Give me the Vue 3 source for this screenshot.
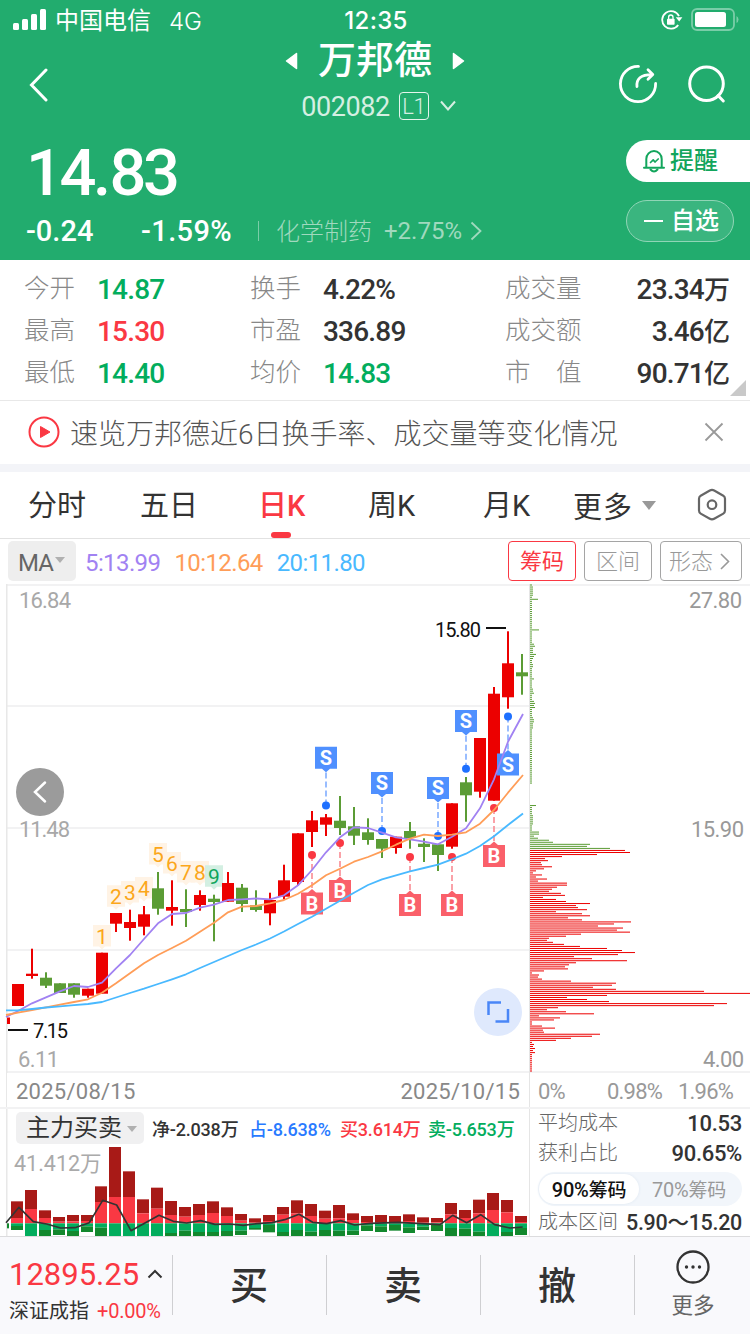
<template>
  <div class="page">
    <header class="header">
      <div class="statusBar">
        <div class="carrier">
          <svg class="signal" width="34" height="22" viewBox="0 0 34 22">
            <rect x="0" y="14" width="6" height="7" rx="1.5" />
            <rect x="9" y="10" width="6" height="11" rx="1.5" />
            <rect x="18" y="5" width="6" height="16" rx="1.5" />
            <rect x="27" y="0" width="6" height="21" rx="1.5" />
          </svg>
          <span class="carrierName">中国电信</span>
          <span class="network">4G</span>
        </div>
        <div class="time">12:35</div>
        <div class="statusIcons">
          <svg width="22" height="20" viewBox="0 0 22 20">
            <path d="M18 6.2A8.8 8.8 0 1 0 17.2 15" fill="none" stroke="#fff" stroke-width="1.8" />
            <path d="M14.8 7.2h6.6l-3.2 4.4z" fill="#fff" />
            <rect x="6" y="8.8" width="7.6" height="6" rx="0.8" fill="#fff" />
            <path d="M7.6 9V7.2a2.2 2.2 0 0 1 4.4 0V9" fill="none" stroke="#fff" stroke-width="1.3" />
          </svg>
          <svg width="48" height="24" viewBox="0 0 48 24">
            <rect x="1" y="1" width="42" height="21" rx="5" fill="none" stroke="#fff" stroke-opacity="0.4" stroke-width="1.8" />
            <rect x="4" y="4" width="31" height="15" rx="2.5" fill="#fff" />
            <path d="M45.5 8v7q2-1 2-3.500t-2-3.500z" fill="#fff" fill-opacity="0.4" />
          </svg>
        </div>
      </div>

      <div class="navBar">
        <svg class="back" width="20" height="34" viewBox="0 0 20 34">
          <path d="M17 2L2.500 17L17 32" fill="none" stroke="#fff" stroke-width="3" stroke-linecap="round" />
        </svg>
        <div class="stock">
          <div class="stockName">
            <svg width="13" height="18" viewBox="0 0 13 18">
              <path d="M11.500 1.500v15L1.500 9z" fill="#fff" stroke="#fff" stroke-width="1.5" stroke-linejoin="round" />
            </svg>
            <span>万邦德</span>
            <svg width="13" height="18" viewBox="0 0 13 18">
              <path d="M1.500 1.500v15L11.500 9z" fill="#fff" stroke="#fff" stroke-width="1.5" stroke-linejoin="round" />
            </svg>
          </div>
          <div class="stockCode">
            <span class="code">002082</span>
            <span class="level">L1</span>
            <svg width="16" height="12" viewBox="0 0 16 12">
              <path d="M1 1.500L8 9.500L15 1.500" fill="none" stroke="#d5efe2" stroke-width="2" />
            </svg>
          </div>
        </div>
        <div class="navIcons">
          <svg width="40" height="40" viewBox="0 0 40 40" fill="none" stroke="#fff" stroke-width="2.8" stroke-linecap="round" stroke-linejoin="round">
            <path d="M20.500 2.400A17.600 17.600 0 1 0 37.600 19.500" />
            <path d="M19 22.500C18.200 15 22.500 10.600 34 10.600M30 5.800L34.800 10.600L30 15.300" />
          </svg>
          <svg width="40" height="40" viewBox="0 0 40 40" fill="none" stroke="#fff" stroke-width="3" stroke-linecap="round">
            <circle cx="19.500" cy="19.800" r="16.800" />
            <path d="M31 31.500L36.300 37" />
          </svg>
        </div>
      </div>

      <div class="quote">
        <div class="quoteMain">
          <div class="price">14<i>.</i>83</div>
          <div class="changeLine">
            <span class="change">-0.24</span>
            <span class="percent">-1.59%</span>
            <i class="split"></i>
            <span class="sector">化学制药</span>
            <span class="sectorPercent">+2.75%</span>
            <svg width="12" height="20" viewBox="0 0 12 20">
              <path d="M1.500 1.500L10.500 10L1.500 18.500" fill="none" stroke="#a0d9be" stroke-width="1.8" />
            </svg>
          </div>
        </div>
        <div class="quoteActions">
          <div class="remind">
            <svg width="24" height="25" viewBox="0 0 24 25" fill="none" stroke="#12a55c" stroke-width="2" stroke-linejoin="round" stroke-linecap="round">
              <path d="M2 18.800H22M4.300 18.500V10A7.700 7.900 0 0 1 19.700 10V18.500" />
              <path d="M8.500 20.500Q12 24.500 15.500 20.500" />
              <path d="M8.500 13.500L11.200 10.800L13 13L16.200 10" stroke-width="1.700" />
            </svg>
            <span>提醒</span>
          </div>
          <div class="favorite">
            <i class="minus"></i>
            <span>自选</span>
          </div>
        </div>
      </div>
    </header>

    <section class="stats">
      <div class="statRow" v-for="(row, index) in stats" :key="index">
        <template v-for="item in row" :key="item.label">
          <span class="statLabel">{{ item.label }}</span>
          <span class="statValue" :class="item.type">{{ item.value }}<b v-if="item.unit">{{ item.unit }}</b></span>
        </template>
      </div>
      <i class="corner"></i>
    </section>

    <section class="notice">
      <svg width="32" height="32" viewBox="0 0 32 32">
        <circle cx="16" cy="16" r="14.500" fill="none" stroke="#fa3843" stroke-width="2" />
        <path d="M12.500 10.500v11L22 16z" fill="#fa3843" stroke="#fa3843" stroke-linejoin="round" />
      </svg>
      <span class="noticeText">速览万邦德近6日换手率、成交量等变化情况</span>
      <svg width="20" height="20" viewBox="0 0 20 20">
        <path d="M1.500 1.500L18.500 18.500M18.500 1.500L1.500 18.500" stroke="#999" stroke-width="1.800" />
      </svg>
    </section>

    <nav class="tabs">
      <span class="tab" v-for="tab in tabs" :key="tab" :class="{ active: tab === activeTab }" @click="activeTab = tab">{{ tab }}</span>
      <span class="tabMore">更多<i class="caret"></i></span>
      <svg width="32" height="34" viewBox="0 0 32 34" fill="none" stroke="#666" stroke-width="2.200" stroke-linejoin="round">
        <path d="M13.800 2.500Q16 1.300 18.200 2.500L27.300 7.700Q29 8.800 29 10.800V22.600Q29 24.600 27.300 25.600L18.200 30.800Q16 32 13.800 30.800L4.700 25.600Q3 24.600 3 22.600V10.800Q3 8.800 4.700 7.700Z" />
        <circle cx="16" cy="16.700" r="4.300" />
      </svg>
    </nav>

    <section class="toolbar">
      <div class="maSelect">MA<i class="caret small"></i></div>
      <div class="maValues">
        <span class="ma5">5:13.99</span>
        <span class="ma10">10:12.64</span>
        <span class="ma20">20:11.80</span>
      </div>
      <div class="chip active">筹码</div>
      <div class="chip">区间</div>
      <div class="chip wide">
        形态
        <svg width="10" height="17" viewBox="0 0 10 17">
          <path d="M1 1L8.500 8.500L1 16" fill="none" stroke="#999" stroke-width="1.600" />
        </svg>
      </div>
    </section>

    <section class="charts">
      <!-- K线 -->
      <svg class="kline" width="530" height="489" viewBox="0 584 530 489">
        <g fill="#f2f2f3">
          <rect v-for="y in gridLines" :key="y" x="7" :y="y" width="523" height="2" />
          <rect x="6" y="584" width="1.500" height="489" fill="#e8e8e8" />
          <rect x="529" y="584" width="1" height="489" fill="#e5e5e5" />
        </g>
        <g class="axis">
          <text x="19" y="607.500" textLength="52">16.84</text>
          <text x="19" y="837" textLength="51">11.48</text>
          <text x="18" y="1067" textLength="41">6.11</text>
        </g>

        <g v-for="tag in countTags" :key="tag.n" :class="tag.n === 9 ? 'tag last' : 'tag'">
          <path :d="`M${tag.x - 9} ${tag.y}h18v21.500h-6l-3 3l-3 -3h-6z`" />
          <text :x="tag.x" :y="tag.y + 18.500">{{ tag.n }}</text>
        </g>

        <g v-for="(c, i) in candles" :key="i" :fill="c[0] ? '#ec0000' : '#5b9c35'">
          <rect :x="candleX(i) - 1" :y="c[1]" width="2" :height="c[4] - c[1]" />
          <rect :x="candleX(i) - 6" :y="c[2]" width="12" :height="c[3] - c[2]" />
        </g>
        <rect x="7" y="1017.500" width="3" height="6.500" fill="#ec0000" />

        <g v-for="m in markers" :key="m.x" :class="m.type">
          <line :x1="m.x" :x2="m.x" :y1="m.dot" :y2="m.box + 11" stroke-width="1.600" stroke-dasharray="6 3" />
          <circle :cx="m.x" :cy="m.dot" r="4" />
          <path :d="markerPath(m)" />
          <text :x="m.x" :y="m.box + 18">{{ m.type }}</text>
        </g>

        <polyline v-for="line in maLines" :key="line.color" :points="toPoints(line.data)" :stroke="line.color" fill="none" stroke-width="1.800" stroke-linejoin="round" />

        <g class="extreme">
          <text x="435" y="636.500" textLength="46">15.80</text>
          <rect x="486" y="627" width="20" height="2" />
          <rect x="8" y="1029" width="20" height="2" />
          <text x="33" y="1038" textLength="35">7.15</text>
        </g>

        <circle cx="40" cy="792" r="24" fill="#9b9b9b" />
        <path d="M45 782.500L35 792L45 801.500" fill="none" stroke="#fff" stroke-width="2.500" stroke-linecap="round" />
        <circle cx="498" cy="1012" r="24" fill="#dfe9fd" />
        <path d="M488.500 1015V1002.500H501M508 1009V1021.500H495.500" fill="none" stroke="#4a86f7" stroke-width="2.500" />
      </svg>

      <!-- 筹码分布 -->
      <svg class="chips" width="220" height="489" viewBox="530 584 220 489">
        <rect x="530" y="584" width="220" height="2" fill="#f2f2f3" />
        <rect x="530" y="1071" width="220" height="2" fill="#f2f2f3" />
        <rect
          v-for="(bar, i) in chipBars"
          :key="i"
          x="530"
          :y="bar.y"
          :width="bar.width"
          height="1"
          :fill="bar.color"
        />
        <g class="axis right">
          <text x="689" y="607.500" textLength="53">27.80</text>
          <text x="691" y="837" textLength="53">15.90</text>
          <text x="703" y="1067" textLength="41">4.00</text>
        </g>
      </svg>
    </section>

    <section class="dateRow">
      <div class="dates">
        <span>2025/08/15</span>
        <span>2025/10/15</span>
      </div>
      <div class="scale">
        <span>0%</span>
        <span>0.98%</span>
        <span>1.96%</span>
      </div>
    </section>

    <section class="bottom">
      <div class="flow">
        <div class="flowHead">
          <div class="flowSelect">主力买卖<i class="caret small"></i></div>
          <span class="net">净-2.038万</span>
          <span class="ratio">占-8.638%</span>
          <span class="buy">买3.614万</span>
          <span class="sell">卖-5.653万</span>
        </div>
        <div class="flowMax">41.412万</div>
        <svg class="flowChart" width="530" height="127" viewBox="0 0 530 127">
          <rect x="6" y="0" width="1.500" height="127" fill="#e8e8e8" />
          <g transform="translate(0 -39) scale(0.33333)">
            <rect x="21" y="460" width="6" height="15" fill="#12882d" />
            <g v-for="(f, i) in flows" :key="i">
              <rect :x="candleX(i) * 3 - 21" :y="f[0]" width="36" :height="f[1] - f[0]" fill="#a81a17" />
              <rect :x="candleX(i) * 3 - 21" :y="f[1]" width="36" :height="460 - f[1]" fill="#fa3843" />
              <rect :x="candleX(i) * 3 - 21" y="460" width="36" :height="f[2] - 460" fill="#02ad5d" />
              <rect :x="candleX(i) * 3 - 21" :y="f[2]" width="36" :height="f[3] - f[2]" fill="#12882d" />
            </g>
            <polyline :points="flowLine" fill="none" stroke="#333" stroke-width="5" stroke-linejoin="round" />
          </g>
        </svg>
      </div>
      <div class="cost">
        <div class="costRow"><span>平均成本</span><b>10.53</b></div>
        <div class="costRow"><span>获利占比</span><b>90.65%</b></div>
        <div class="toggle">
          <span class="on">90%<em>筹码</em></span>
          <span>70%<em>筹码</em></span>
        </div>
        <div class="costRow range"><span>成本区间</span><b>5.90～15.20</b></div>
      </div>
    </section>

    <footer class="footer">
      <div class="indexBox">
        <div class="indexValue">
          12895.25
          <svg width="16" height="10" viewBox="0 0 16 10">
            <path d="M1.500 8.500L8 2L14.500 8.500" fill="none" stroke="#333" stroke-width="2" />
          </svg>
        </div>
        <div class="indexName">深证成指<span>+0.00%</span></div>
      </div>
      <div class="trade">买</div>
      <div class="trade">卖</div>
      <div class="trade">撤</div>
      <div class="more">
        <svg width="36" height="36" viewBox="0 0 36 36">
          <circle cx="18" cy="18" r="15.500" fill="none" stroke="#333" stroke-width="2.300" />
          <circle cx="11.500" cy="18" r="1.700" fill="#333" />
          <circle cx="18" cy="18" r="1.700" fill="#333" />
          <circle cx="24.500" cy="18" r="1.700" fill="#333" />
        </svg>
        <span>更多</span>
      </div>
    </footer>
  </div>
</template>

<script setup>
import { ref, computed } from 'vue'

const tabs = ['分时', '五日', '日K', '周K', '月K']
const activeTab = ref('日K')

const stats = [
  [
    { label: '今开', value: '14.87', type: 'down' },
    { label: '换手', value: '4.22%' },
    { label: '成交量', value: '23.34', unit: '万' }
  ],
  [
    { label: '最高', value: '15.30', type: 'up' },
    { label: '市盈', value: '336.89' },
    { label: '成交额', value: '3.46', unit: '亿' }
  ],
  [
    { label: '最低', value: '14.40', type: 'down' },
    { label: '均价', value: '14.83', type: 'down' },
    { label: '市　值', value: '90.71', unit: '亿' }
  ]
]

const gridLines = [584, 705, 827, 949, 1071]

// 涨跌, 上影线, 实体上, 实体下, 下影线
const candles = [
  [1, 984, 984, 1006, 1006],
  [1, 948.7, 973.7, 976, 978.7],
  [0, 972.3, 977.7, 985.7, 988],
  [0, 983.3, 983.3, 993, 993],
  [0, 983.3, 983.3, 994.7, 997.7],
  [1, 988.7, 988.7, 995.7, 997.7],
  [1, 952.7, 952.7, 993.7, 993.7],
  [1, 913, 913, 923.7, 932],
  [1, 909.7, 922, 928, 940.7],
  [1, 906, 914.3, 926.7, 935.3],
  [0, 872, 888.3, 908.7, 914.7],
  [1, 880.3, 907, 910.7, 925.7],
  [0, 889.3, 909, 912, 927],
  [1, 890.3, 895, 905, 910.7],
  [0, 894.7, 898.7, 902, 941.3],
  [1, 872, 883, 901.7, 901.7],
  [0, 884, 887.7, 904, 912],
  [0, 890.3, 905.3, 910, 911.7],
  [1, 892.7, 900, 913.3, 925.3],
  [1, 864.7, 880.3, 896.7, 899.3],
  [1, 833.3, 833.3, 882, 885],
  [1, 811, 820.3, 832, 847],
  [1, 814, 817.3, 824.7, 836],
  [0, 796, 820.7, 828, 835],
  [0, 807, 826.3, 835.7, 845],
  [0, 818.3, 832.3, 840, 844.7],
  [0, 839, 839, 848.7, 858],
  [1, 836.7, 836.7, 848, 853.7],
  [0, 822, 831, 838, 848.7],
  [0, 838.3, 843.7, 847, 862],
  [0, 844.3, 844.3, 855, 871],
  [1, 803.3, 803.3, 846.7, 848.7],
  [0, 777, 782.3, 795.3, 821.7],
  [1, 738, 738, 791.7, 797.7],
  [1, 687, 693.7, 800.7, 800.7],
  [1, 631.3, 663.3, 697.3, 708.7],
  [0, 654, 672.3, 676.3, 694.7]
]

const candleX = i => 18 + i * 14

// 均线，第一个点在左边界上
const maLines = [
  {
    color: '#a182f2',
    data: [
      1017, 1011, 1003.3, 997.3, 991.3, 986, 987, 982.7, 968.3, 955, 939, 923.3, 914, 913, 907.7, 904.7, 900, 899.3, 898.5,
      899.3, 895.3, 885.3, 870, 852.3, 837.3, 827.3, 828, 832.7, 837.3, 839.3, 841.7, 844.3, 836.7, 828.3, 808.3, 779.3,
      741.7, 714
    ]
  },
  {
    color: '#ff9d58',
    data: [
      1015, 1012.7, 1010, 1007.3, 1004.7, 1002, 999.3, 992.7, 983.3, 973.3, 963.3, 955, 948, 940.7, 931.7, 922.7, 912.3,
      906.7, 906, 903.3, 900, 893.7, 885.3, 875.3, 868.7, 861.7, 857, 851.3, 844.7, 838.7, 834.7, 836, 834.7, 832.3, 823.7,
      810, 792.7, 775
    ]
  },
  {
    color: '#49b9ff',
    data: [
      1010.3, 1010.3, 1009, 1007.5, 1006.3, 1005.2, 1004, 1002, 997.5, 993, 988.7, 984, 979.3, 974.3, 968, 962, 956, 950,
      944.5, 938.5, 931.5, 924, 916.7, 908.7, 900.7, 892.7, 885, 879.3, 875.3, 871.3, 868, 864.7, 859.3, 853.7, 846, 836.3,
      825, 813.5
    ]
  }
]

const toPoints = data => {
  return data.map((y, i) => `${i === 0 ? 6 : i === data.length - 1 ? 523 : candleX(i - 1)},${y}`).join(' ')
}

const countTags = [
  { n: 1, x: 102, y: 925 },
  { n: 2, x: 116, y: 885.3 },
  { n: 3, x: 130, y: 881 },
  { n: 4, x: 144, y: 877 },
  { n: 5, x: 158, y: 843 },
  { n: 6, x: 172, y: 852 },
  { n: 7, x: 186, y: 861 },
  { n: 8, x: 200, y: 861 },
  { n: 9, x: 214, y: 865.3 }
]

const markers = [
  { type: 'S', x: 326, dot: 805.5, box: 746.7 },
  { type: 'S', x: 382, dot: 831, box: 772 },
  { type: 'S', x: 438, dot: 836, box: 777 },
  { type: 'S', x: 466, dot: 768.7, box: 710 },
  { type: 'S', x: 508, dot: 716.5, box: 753.5 },
  { type: 'B', x: 312, dot: 855, box: 892.5 },
  { type: 'B', x: 340, dot: 843, box: 880 },
  { type: 'B', x: 410, dot: 857, box: 894 },
  { type: 'B', x: 452, dot: 857, box: 894 },
  { type: 'B', x: 494, dot: 808, box: 845 }
]

// 小三角朝向圆点一侧
const markerPath = m => {
  const x = m.x - 11
  if (m.dot < m.box) {
    return `M${x} ${m.box}h7l4 -3.500l4 3.500h7v22h-22z`
  }
  return `M${x} ${m.box}h22v22h-7l-4 3.500l-4 -3.500h-7z`
}

// 上方筹码 [数量, 长度]
const chipTop = [
  [1, 2], [5, 3], [1, 2], [1, 8], [14, 2], [1, 9], [6, 2], [1, 4], [1, 5], [3, 3], [1, 6], [1, 4], [1, 3],
  [2, 2], [2, 3], [5, 2], [1, 4], [4, 2], [2, 3], [1, 4], [3, 2], [1, 4], [1, 5], [1, 4], [1, 5], [4, 2],
  [1, 3], [2, 4], [3, 3], [27, 2], [10, 0], [1, 6], [4, 2], [5, 3], [3, 2], [2, 9], [1, 4], [1, 8]
]
const chipBottom = [
  19, 23, 60, 57, 80, 95, 100, 67, 32, 15, 18, 11, 12, 22, 14, 6, 3, 12, 6, 17, 8, 37, 37, 27, 22, 19, 31, 35, 13, 26,
  36, 60, 46, 48, 57, 26, 52, 60, 38, 52, 101, 84, 68, 93, 87, 100, 51, 36, 19, 17, 23, 34, 50, 77, 92, 105, 88, 44, 62,
  97, 46, 39, 35, 38, 14, 2, 9, 8, 12, 41, 86, 82, 63, 86, 174, 220, 77, 37, 57, 79, 197, 184, 28, 17, 36, 64, 9, 30,
  24, 2, 2, 12, 25, 13, 14, 70, 62, 41, 26, 2, 4, 3, 5, 3, 5, 2, 2, 2, 2, 2, 2, 2, 2, 2
]

const chipBars = computed(() => {
  const top = chipTop.flatMap(([count, width]) => Array(count).fill(width))
  return [...top, ...chipBottom].map((width, i) => {
    const n = i - top.length
    return {
      y: 901 + (n - 30) * 2.042,
      width,
      color: n < 5 ? '#5b9c35' : '#ec0000'
    }
  })
})

// 主力买卖：红上, 红分界, 绿分界, 绿下
const flows = [
  [394, 444, 468, 480], [360, 417, 498, 498], [421, 444, 480, 498], [441, 455, 478, 495], [435, 454, 483, 498],
  [435, 453, 469, 486], [349, 396, 473, 498], [231, 381, 498, 498], [304, 381, 498, 498], [388, 430, 498, 498],
  [353, 416, 498, 498], [393, 435, 489, 498], [411, 440, 482, 498], [402, 435, 486, 498], [394, 429, 486, 498],
  [412, 438, 483, 498], [432, 452, 482, 495], [445, 458, 474, 479], [435, 453, 465, 487], [411, 434, 486, 498],
  [391, 430, 480, 498], [402, 438, 485, 498], [422, 446, 480, 498], [405, 445, 482, 498], [430, 450, 482, 495],
  [438, 456, 466, 483], [435, 456, 469, 486], [438, 456, 465, 482], [433, 453, 472, 489], [442, 458, 470, 480],
  [444, 457, 464, 483], [399, 433, 474, 498], [420, 444, 476, 498], [389, 430, 485, 498], [369, 420, 498, 498],
  [390, 427, 486, 498], [438, 456, 474, 495]
]
const flowLine =
  '18,458 57,412 100,455 140,462 182,474 225,473 268,458 308,391 350,405 393,482 435,459 477,436 520,454 560,459 602,452 645,463 690,462 730,466 770,461 816,458 854,449 897,433 938,457 980,461 1022,452 1064,465 1110,460 1195,457 1250,460 1320,464 1358,436 1400,458 1442,434 1484,464 1530,474 1568,471'
</script>

<style>
  body {
    background: #fff;
  }
</style>

<style scoped>
  .page {
    width: 750px;
    height: 1334px;
    overflow: hidden;
    background: #fff;
    color: #333;
    font-family: Roboto, 'Noto Sans CJK SC', sans-serif;
    font-weight: 400;
  }
  .page * {
    box-sizing: border-box;
  }
  svg {
    display: block;
    flex: none;
  }
  span {
    white-space: nowrap;
  }

  /* 头部 */
  .header {
    height: 260px;
    background: #22ac6e;
    color: #fff;
  }
  .statusBar {
    display: grid;
    grid-template-columns: 1fr auto 1fr;
    align-items: center;
    height: 40px;
    padding: 0 11px 0 13px;
    font-size: 24px;
  }
  .carrier {
    display: flex;
    align-items: center;
    font-weight: 300;
  }
  .carrierName {
    padding-bottom: 3px;
    font-weight: 400;
  }
  .signal {
    margin-right: 8px;
    fill: #fff;
  }
  .network {
    margin-left: 18px;
    padding-top: 2px;
    font-family: Inter, sans-serif;
    font-size: 24px;
  }
  .time {
    padding-top: 1px;
    font-family: Inter, sans-serif;
    font-size: 24px;
    font-weight: 500;
    letter-spacing: 0.3px;
  }
  .statusIcons {
    display: flex;
    align-items: center;
    justify-content: flex-end;
    gap: 8px;
  }
  .navBar {
    display: grid;
    grid-template-columns: 150px 1fr 150px;
    height: 100px;
  }
  .back {
    margin: 28px 0 0 29px;
  }
  .stock {
    display: flex;
    flex-direction: column;
    align-items: center;
  }
  .stockName {
    display: flex;
    align-items: center;
    gap: 20px;
    height: 41px;
    font-size: 38px;
    font-weight: 500;
    line-height: 38px;
  }
  .stockName span {
    padding-bottom: 2px;
  }
  .stockCode {
    display: flex;
    align-items: center;
    height: 32px;
    margin: 9px 0 0 7px;
    color: #d5efe2;
    font-size: 27px;
    letter-spacing: -0.4px;
  }
  .code {
    padding-top: 2px;
  }
  .level {
    width: 30px;
    height: 28px;
    margin: 0 11px 0 9px;
    border: 1px solid #e5f5ed;
    border-radius: 4px;
    font-size: 22px;
    font-weight: 300;
    line-height: 27px;
    text-align: center;
  }
  .navIcons {
    display: flex;
    gap: 29px;
    padding: 24px 0 0 18px;
  }
  .quote {
    display: flex;
    justify-content: space-between;
  }
  .quoteMain {
    padding-left: 26px;
  }
  .price {
    height: 66px;
    font-size: 65px;
    font-weight: 500;
    letter-spacing: -3.500px;
    line-height: 66px;
  }
  .price i {
    font-style: normal;
    letter-spacing: -1.500px;
  }
  .changeLine {
    display: flex;
    align-items: center;
    height: 50px;
    font-size: 29px;
    font-weight: 500;
  }
  .change {
    width: 115px;
  }
  .percent {
    width: 117px;
    letter-spacing: 0.4px;
  }
  .split {
    width: 1px;
    height: 20px;
    margin-right: 17px;
    background: #7acda8;
  }
  .sector {
    width: 108px;
    padding-bottom: 4px;
    color: #a0d9be;
    font-size: 24px;
    font-weight: 300;
  }
  .sectorPercent {
    width: 86px;
    color: #a0d9be;
    font-size: 24px;
    font-weight: 400;
  }
  .quoteActions {
    width: 124px;
  }
  .remind,
  .favorite {
    display: flex;
    align-items: center;
    height: 42px;
    font-size: 24px;
    line-height: 40px;
  }
  .remind {
    gap: 4px;
    padding-left: 16px;
    border-radius: 21px 0 0 21px;
    background: #fff;
    color: #12a55c;
    font-weight: 500;
  }
  .favorite {
    gap: 8px;
    width: 108px;
    margin-top: 18px;
    padding-left: 17px;
    border: 1px solid #90d5b6;
    border-radius: 21px;
    background: #3ab57f;
    font-weight: 500;
  }
  .minus {
    width: 19px;
    height: 2px;
    background: #fff;
  }

  /* 行情数据 */
  .stats {
    position: relative;
    height: 141px;
    padding-top: 8px;
    border-bottom: 1px solid #e8e8e8;
  }
  .statRow {
    display: grid;
    grid-template-columns: 72px 154px 72px 183px 77px 1fr;
    align-items: center;
    height: 42px;
    padding: 0 20px 0 25px;
  }
  .statLabel {
    margin-left: -1px;
    padding-bottom: 2px;
    color: #888;
    font-size: 25.500px;
    font-weight: 300;
    line-height: 38px;
  }
  .statValue {
    padding-top: 2px;
    font-size: 28px;
    font-weight: 500;
    letter-spacing: -0.8px;
    line-height: 40px;
  }
  .statValue:last-child {
    text-align: right;
  }
  .statValue b {
    font-size: 26px;
    font-weight: 500;
    letter-spacing: 0;
  }
  .up {
    color: #fa3843;
  }
  .down {
    color: #02ad5d;
  }
  .corner {
    position: absolute;
    right: 4px;
    bottom: 4px;
    border-bottom: 16px solid #c9c9c9;
    border-left: 16px solid transparent;
  }

  .notice {
    display: flex;
    align-items: center;
    height: 63px;
    padding: 0 26px 1px 28px;
  }
  .noticeText {
    flex: 1;
    margin-left: 10px;
    color: #555;
    font-size: 28px;
    font-weight: 300;
  }

  .tabs {
    display: flex;
    align-items: center;
    height: 75px;
    padding-left: 28px;
    border-top: 8px solid #f3f4f8;
    border-bottom: 1px solid #e2e2e2;
    color: #333;
    font-size: 29px;
  }
  .tab {
    position: relative;
    width: 112px;
    padding-top: 3px;
    line-height: 63px;
  }
  .tab:nth-child(2) {
    width: 118px;
  }
  .tab:nth-child(3) {
    width: 110px;
  }
  .tab:nth-child(4) {
    width: 115px;
  }
  .tab:nth-child(5) {
    width: 90px;
  }
  .tab.active {
    color: #fa3843;
    font-weight: 500;
  }
  .tab.active::after {
    position: absolute;
    bottom: 0;
    left: 13px;
    width: 20px;
    height: 6px;
    border-radius: 3px;
    background: #fa3843;
    content: '';
  }
  .tabMore {
    display: flex;
    align-items: center;
    width: 123px;
    padding-bottom: 1px;
    letter-spacing: 1px;
  }
  .caret {
    margin: 2px 0 0 9px;
    border-top: 9px solid #999;
    border-right: 7px solid transparent;
    border-left: 7px solid transparent;
  }
  .caret.small {
    margin: -2px 0 0 1px;
    border-width: 6px 5px 0;
    border-top-color: #b0b0b0;
  }

  .toolbar {
    display: flex;
    gap: 8px;
    height: 45px;
    padding: 2px 8px 3px;
  }
  .maSelect {
    display: flex;
    align-items: center;
    width: 68px;
    padding: 3px 0 0 10px;
    border-radius: 5px;
    background: #eee;
    color: #666;
    font-size: 24px;
    letter-spacing: -1px;
  }
  .maSelect .caret {
    margin: -5px 0 0 2px;
  }
  .maValues {
    display: flex;
    flex: 1;
    align-items: center;
    gap: 14px;
    padding: 4px 0 0 1px;
    font-size: 24px;
    letter-spacing: -0.600px;
  }
  .ma5 {
    color: #a182f2;
  }
  .ma10 {
    color: #ff9d58;
  }
  .ma20 {
    color: #49b9ff;
  }
  .chip {
    width: 68px;
    border: 1px solid #a5a5a5;
    border-radius: 4px;
    color: #999;
    font-size: 22px;
    font-weight: 300;
    line-height: 39px;
    text-align: center;
  }
  .chip.active {
    border-color: #fa3843;
    color: #fa3843;
    font-weight: 400;
  }
  .chip.wide {
    display: flex;
    align-items: center;
    justify-content: center;
    gap: 7px;
    width: 82px;
    padding-right: 3px;
  }

  /* 图表 */
  .charts {
    display: flex;
    height: 489px;
  }
  .axis text {
    fill: #a8a8a8;
    font-size: 22px;
  }
  .axis.right text {
    fill: #999;
  }
  .extreme text {
    font-size: 20px;
  }
  .extreme {
    fill: #111;
  }
  .tag path {
    fill: #fff3e5;
  }
  .tag text {
    fill: #fba71b;
    font-size: 21px;
    text-anchor: middle;
  }
  .tag.last path {
    fill: #d3efe2;
  }
  .tag.last text {
    fill: #10a65d;
  }
  .S text,
  .B text {
    fill: #fff;
    font-size: 20px;
    font-weight: 700;
    text-anchor: middle;
  }
  .S line {
    stroke: #80adff;
  }
  .S circle {
    fill: #1e70ff;
  }
  .S path {
    fill: #4f90ff;
  }
  .B line {
    stroke: #f98b93;
  }
  .B circle {
    fill: #fa3843;
  }
  .B path {
    fill: #fa606a;
  }

  .dateRow {
    display: flex;
    height: 36px;
    border-bottom: 2px solid #f2f2f3;
    font-size: 22px;
    line-height: 37px;
  }
  .dates {
    display: flex;
    justify-content: space-between;
    width: 524px;
    margin-left: 6px;
    padding: 0 9px 0 9px;
    border-right: 1px solid #e5e5e5;
    border-left: 1px solid #e8e8e8;
    color: #888;
    letter-spacing: 0.250px;
  }
  .scale {
    display: grid;
    flex: 1;
    grid-template-columns: 69px 71px 1fr;
    padding-left: 8px;
    color: #999;
    letter-spacing: -0.8px;
  }

  .bottom {
    display: flex;
    height: 127px;
  }
  .flow {
    position: relative;
    width: 530px;
    border-right: 1px solid #e5e5e5;
  }
  .flowHead {
    position: relative;
    z-index: 1;
    display: flex;
    align-items: center;
    height: 32px;
    margin-top: 3px;
    padding-left: 16px;
    font-size: 18px;
    font-weight: 400;
  }
  .flowSelect {
    display: flex;
    align-items: center;
    width: 128px;
    height: 32px;
    margin-right: 8px;
    padding-left: 10px;
    border-radius: 5px;
    background: #f0f0f1;
    font-size: 24px;
    line-height: 30px;
  }
  .flowSelect .caret {
    margin: 2px 0 0 5px;
  }
  .net,
  .ratio,
  .buy,
  .sell {
    font-weight: 500;
    letter-spacing: -0.2px;
  }
  .net {
    width: 97px;
  }
  .ratio {
    width: 91px;
    color: #287aff;
  }
  .buy {
    width: 88px;
    color: #fa3843;
  }
  .sell {
    color: #02ad5d;
  }
  .flowMax {
    position: relative;
    padding-left: 14px;
    color: #aaa;
    font-size: 21.500px;
    font-weight: 400;
    line-height: 40px;
  }
  .flowChart {
    position: absolute;
    top: 0;
    left: 0;
  }
  .cost {
    flex: 1;
    padding: 0 8px 0 8px;
  }
  .costRow {
    display: flex;
    align-items: center;
    justify-content: space-between;
    height: 30px;
    color: #666;
    font-size: 20px;
    font-weight: 300;
    line-height: 28px;
  }
  .costRow span {
    padding-bottom: 2px;
  }
  .costRow b {
    color: #333;
    font-size: 22px;
    font-weight: 500;
    letter-spacing: -0.3px;
  }
  .costRow.range {
    height: 34px;
    line-height: 22px;
  }
  .costRow.range b {
    font-size: 21.500px;
  }
  .toggle {
    display: flex;
    align-items: center;
    height: 34px;
    margin-top: 3px;
    padding: 0 2px 0 1px;
    border-radius: 17px;
    background: #f2f6fb;
    color: #999;
    font-size: 20px;
    letter-spacing: -0.2px;
    line-height: 32px;
  }
  .toggle span {
    width: 100px;
    height: 30px;
    border-radius: 15px;
    text-align: center;
  }
  .toggle em {
    font-size: 19px;
    font-style: normal;
  }
  .toggle .on {
    background: #fff;
    box-shadow: 0 0 3px #dde6f0;
    color: #111;
    font-weight: 500;
  }

  /* 底部操作栏 */
  .footer {
    position: relative;
    display: grid;
    grid-template-columns: 172px 154px 154px 154px 1fr;
    height: 98px;
    border-top: 1px solid #dcdcde;
    background: #f9f9fc;
  }
  .indexBox {
    padding: 17px 0 0 9px;
  }
  .indexValue {
    display: flex;
    align-items: center;
    gap: 8px;
    height: 40px;
    color: #fa3843;
    font-size: 31px;
  }
  .indexName {
    padding-top: 1px;
    font-size: 20px;
    line-height: 32px;
  }
  .indexName span {
    margin-left: 8px;
    color: #fa3843;
    letter-spacing: -0.2px;
  }
  .trade,
  .more {
    position: relative;
    text-align: center;
  }
  .trade {
    font-size: 38px;
    font-weight: 500;
    line-height: 98px;
  }
  .trade::before,
  .more::before {
    position: absolute;
    top: 18px;
    left: 0;
    width: 1px;
    height: 60px;
    background: #cfcfd2;
    content: '';
  }
  .more {
    display: flex;
    flex-direction: column;
    align-items: center;
    padding: 12px 0 0 2px;
    color: #666;
    font-size: 21.500px;
    line-height: 42px;
  }
</style>
